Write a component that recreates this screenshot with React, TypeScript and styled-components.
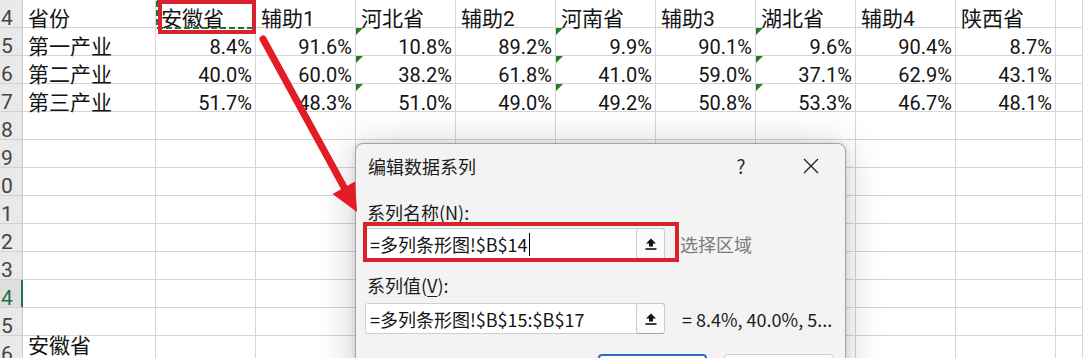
import React from 'react';
import styled, { createGlobalStyle } from 'styled-components';

const GlobalStyle = createGlobalStyle`
  html, body { margin: 0; padding: 0; background: #ffffff; }
  body { font-family: "Noto Sans CJK SC", "Noto Sans", sans-serif; }
`;

const Stage = styled.div`
  position: relative;
  width: 1083px;
  height: 358px;
  overflow: hidden;
  background: #ffffff;
`;

const Sheet = styled.div`
  display: flex;
  flex-direction: column;
`;

const Row = styled.div`
  display: flex;
  height: 28px;
  flex: 0 0 28px;
`;

const RowHeader = styled.div<{ $active?: boolean }>`
  flex: 0 0 23px;
  box-sizing: border-box;
  display: flex;
  justify-content: flex-start;
  align-items: flex-end;
  padding-left: 1px;
  background: ${(p) => (p.$active ? '#dedede' : '#e9e9e9')};
  color: ${(p) => (p.$active ? '#217346' : '#444444')};
  border-bottom: 1px solid #d2d2d2;
  border-right: 1px solid ${(p) => (p.$active ? '#217346' : '#c9c9c9')};
  box-shadow: ${(p) => (p.$active ? 'inset -1px 0 0 #217346' : 'none')};
  font-family: Roboto, "Noto Sans", sans-serif;
  font-size: 21px;
  line-height: 18px;
  white-space: nowrap;
`;

const Cell = styled.div<{ $w?: number; $right?: boolean; $num?: boolean; $flag?: boolean; $top?: boolean }>`
  position: relative;
  ${(p) => (p.$w ? `flex: 0 0 ${p.$w}px;` : 'flex: 1 1 auto;')}
  box-sizing: border-box;
  border-right: 1px solid #d5d5d5;
  border-bottom: 1px solid #d5d5d5;
  display: flex;
  align-items: ${(p) => (p.$top ? 'flex-start' : 'flex-end')};
  justify-content: ${(p) => (p.$right ? 'flex-end' : 'flex-start')};
  padding: ${(p) => (p.$top ? '2px' : '0')} ${(p) => (p.$right ? '3px' : '0')} 0 ${(p) => (p.$right ? '0' : '5px')};
  font-family: Roboto, "Noto Sans CJK SC", sans-serif;
  font-size: ${(p) => (p.$num ? '20px' : '21px')};
  line-height: 16px;
  color: #141414;
  white-space: nowrap;

  ${(p) =>
    p.$flag
      ? `&::before {
    content: '';
    position: absolute;
    top: 0;
    left: 0;
    width: 0;
    height: 0;
    border-top: 7px solid #1e7d22;
    border-right: 7px solid transparent;
  }`
      : ''}
`;

const CellText = styled.span``;

/* ---------- dialog ---------- */

const Dialog = styled.div`
  position: absolute;
  left: 355px;
  top: 143px;
  width: 491px;
  height: 250px;
  box-sizing: border-box;
  background: #f3f3f3;
  border: 1px solid #a3a3a3;
  border-radius: 8px;
  box-shadow: 0 4px 40px rgba(0, 0, 0, 0.2), 0 0 6px rgba(0, 0, 0, 0.12);
  display: flex;
  flex-direction: column;
  padding: 0 11px 0 9px;
  font-family: "Noto Sans CJK SC", "Noto Sans", sans-serif;
  font-size: 18px;
  color: #1b1b1b;
`;

const TitleBar = styled.div`
  height: 43px;
  display: flex;
  align-items: center;
  padding-left: 3px;
`;

const Title = styled.div`
  flex: 1;
  line-height: 24px;
`;

const HelpButton = styled.div`
  width: 40px;
  text-align: center;
  font-size: 19px;
  line-height: 24px;
  color: #2a2a2a;
  margin-right: 27px;
`;

const CloseButton = styled.div`
  width: 46px;
  display: flex;
  justify-content: center;
  align-items: center;
  color: #1f1f1f;
`;

const FieldLabel = styled.div<{ $gap: number }>`
  margin-top: ${(p) => p.$gap}px;
  padding-left: 2px;
  line-height: 24px;
  height: 24px;
`;

const Key = styled.span`
  text-decoration: underline;
  text-underline-offset: 3px;
`;

const InputRow = styled.div<{ $gap: number }>`
  margin-top: ${(p) => p.$gap}px;
  display: flex;
  align-items: center;
`;

const RefInput = styled.div<{ $h: number }>`
  width: 300px;
  height: ${(p) => p.$h}px;
  box-sizing: border-box;
  background: #ffffff;
  border: 1px solid #cfcfcf;
  border-radius: 3px;
  display: flex;
  align-items: stretch;
`;

const RefText = styled.div`
  flex: 1;
  display: flex;
  align-items: center;
  padding-left: 4px;
  white-space: nowrap;
  color: #151515;
`;

const Caret = styled.span`
  display: inline-block;
  width: 1px;
  height: 23px;
  background: #000;
  margin-left: 1px;
`;

const PickButton = styled.div`
  width: 29px;
  margin: -1px -1px -1px 0;
  box-sizing: border-box;
  border: 1px solid #cbcbcb;
  border-bottom-color: #a9a9a9;
  border-radius: 3px;
  background: #fbfbfb;
  display: flex;
  align-items: center;
  justify-content: center;
`;

const SideText = styled.div<{ $muted?: boolean }>`
  margin-left: ${(p) => (p.$muted ? '15px' : '17px')};
  color: ${(p) => (p.$muted ? '#7b7b7b' : '#1b1b1b')};
  white-space: nowrap;
`;

const ButtonRow = styled.div`
  margin-top: 20px;
  display: flex;
  justify-content: flex-end;
  gap: 17px;
`;

const DialogButton = styled.div<{ $primary?: boolean }>`
  width: ${(p) => (p.$primary ? '109px' : '110px')};
  height: 32px;
  box-sizing: border-box;
  border-radius: 4px;
  background: #fdfdfd;
  border: ${(p) => (p.$primary ? '2px solid #2a6fc0' : '1px solid #cfcfcf')};
`;

/* ---------- annotations ---------- */

const Annotation = styled.svg`
  position: absolute;
  left: 0;
  top: 0;
  pointer-events: none;
`;

const MarchingAnts = styled.svg`
  position: absolute;
  left: 155px;
  top: -2px;
`;

const RedFrame = styled.div<{ $l: number; $t: number; $w: number; $h: number }>`
  position: absolute;
  left: ${(p) => p.$l}px;
  top: ${(p) => p.$t}px;
  width: ${(p) => p.$w}px;
  height: ${(p) => p.$h}px;
  box-sizing: border-box;
  border: 4px solid #d8232d;
  pointer-events: none;
`;

const headers = ['省份', '安徽省', '辅助1', '河北省', '辅助2', '河南省', '辅助3', '湖北省', '辅助4', '陕西省'];
const dataRows: string[][] = [
  ['第一产业', '8.4%', '91.6%', '10.8%', '89.2%', '9.9%', '90.1%', '9.6%', '90.4%', '8.7%'],
  ['第二产业', '40.0%', '60.0%', '38.2%', '61.8%', '41.0%', '59.0%', '37.1%', '62.9%', '43.1%'],
  ['第三产业', '51.7%', '48.3%', '51.0%', '49.0%', '49.2%', '50.8%', '53.3%', '46.7%', '48.1%'],
];
const flagCols = [3, 5, 7];

const colWidth = (i: number) => (i === 0 ? 133 : 100);
const visibleDigit = (n: number) => String(n).slice(-1);

const UploadIcon = () => (
  <svg width="14" height="14" viewBox="0 0 14 14">
    <polygon points="7,1.5 12,6.5 9,6.5 9,9.5 5,9.5 5,6.5 2,6.5" fill="#111" />
    <rect x="1.5" y="11.2" width="11" height="1.6" fill="#111" />
  </svg>
);

const CloseIcon = () => (
  <svg width="16" height="16" viewBox="0 0 16 16">
    <path d="M1 1 L15 15 M15 1 L1 15" stroke="#1f1f1f" strokeWidth="1.3" fill="none" />
  </svg>
);

export default function App() {
  const emptyRows = [18, 19, 20, 21, 22, 23, 24, 25];
  return (
    <Stage>
      <GlobalStyle />
      <Sheet>
        <Row>
          <RowHeader>{visibleDigit(14)}</RowHeader>
          {headers.map((h, i) => (
            <Cell key={i} $w={colWidth(i)}>
              <CellText>{h}</CellText>
            </Cell>
          ))}
          <Cell />
        </Row>
        {dataRows.map((r, ri) => (
          <Row key={ri}>
            <RowHeader>{visibleDigit(15 + ri)}</RowHeader>
            {r.map((v, i) => (
              <Cell key={i} $w={colWidth(i)} $right={i > 0} $num={i > 0} $flag={flagCols.includes(i)}>
                <CellText>{v}</CellText>
              </Cell>
            ))}
            <Cell />
          </Row>
        ))}
        {emptyRows.map((n) => (
          <Row key={n}>
            <RowHeader $active={n === 24}>{visibleDigit(n)}</RowHeader>
            {headers.map((_, i) => (
              <Cell key={i} $w={colWidth(i)} />
            ))}
            <Cell />
          </Row>
        ))}
        <Row>
          <RowHeader>{visibleDigit(26)}</RowHeader>
          {headers.map((_, i) => (
            <Cell key={i} $w={colWidth(i)} $top>
              {i === 0 ? <CellText>安徽省</CellText> : null}
            </Cell>
          ))}
          <Cell />
        </Row>
      </Sheet>

      <MarchingAnts width="102" height="32" viewBox="0 0 102 32">
        <rect x="2" y="2" width="97" height="28" fill="none" stroke="#217346" strokeWidth="2" strokeDasharray="6 3" />
      </MarchingAnts>
      <RedFrame $l={158} $t={0} $w={98} $h={34} />

      <Dialog>
        <TitleBar>
          <Title>编辑数据系列</Title>
          <HelpButton>?</HelpButton>
          <CloseButton>
            <CloseIcon />
          </CloseButton>
        </TitleBar>
        <FieldLabel $gap={13}>
          系列名称(<Key>N</Key>):
        </FieldLabel>
        <InputRow $gap={4}>
          <RefInput $h={32}>
            <RefText>
              =多列条形图!$B$14
              <Caret />
            </RefText>
            <PickButton>
              <UploadIcon />
            </PickButton>
          </RefInput>
          <SideText $muted>选择区域</SideText>
        </InputRow>
        <FieldLabel $gap={13}>
          系列值(<Key>V</Key>):
        </FieldLabel>
        <InputRow $gap={6}>
          <RefInput $h={31}>
            <RefText>=多列条形图!$B$15:$B$17</RefText>
            <PickButton>
              <UploadIcon />
            </PickButton>
          </RefInput>
          <SideText>= 8.4%, 40.0%, 5...</SideText>
        </InputRow>
        <ButtonRow>
          <DialogButton $primary aria-label="确定" />
          <DialogButton aria-label="取消" />
        </ButtonRow>
      </Dialog>

      <RedFrame $l={363} $t={222} $w={316} $h={40} />

      <Annotation width="1083" height="358" viewBox="0 0 1083 358">
        <line x1="263" y1="39" x2="345" y2="189" stroke="#e41c25" strokeWidth="7" strokeLinecap="round" />
        <polygon points="357,212 332.5,194 355,181.5" fill="#e41c25" />
      </Annotation>
    </Stage>
  );
}
